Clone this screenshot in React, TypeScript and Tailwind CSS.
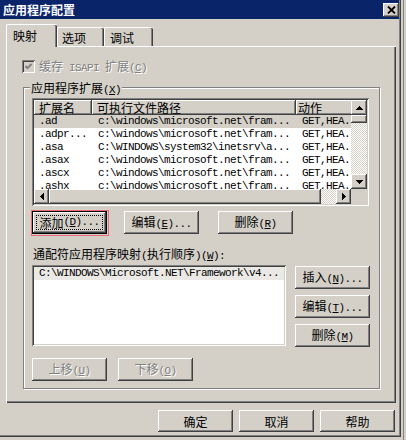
import clsx from 'clsx'

const mono = "font-['Liberation_Mono',monospace] text-[11px] tracking-[-0.6px]"
const raised = 'bg-[#d4d0c8] shadow-[inset_-1px_-1px_0_#404040,inset_1px_1px_0_#fff,inset_-2px_-2px_0_#808080]'
const sunken = 'shadow-[inset_1px_1px_0_#808080,inset_-1px_-1px_0_#fff,inset_2px_2px_0_#404040,inset_-2px_-2px_0_#d4d0c8]'
const dim = 'text-[#808080] [text-shadow:1px_1px_0_#fff]'
const dither = 'bg-[repeating-conic-gradient(#fff_0_25%,#d4d0c8_0_50%)] bg-[length:2px_2px]'

// '&' marks the access key, which gets underlined
function Txt({ text }: { text: string }) {
  const runs: { s: string; wide: boolean; u: boolean }[] = []
  for (let i = 0; i < text.length; i++) {
    let c = text[i]
    let u = false
    if (c === '&' && i + 1 < text.length) {
      c = text[++i]
      u = true
    }
    const wide = c.charCodeAt(0) > 0x2e80
    const last = runs[runs.length - 1]
    if (last && last.wide === wide && last.u === u) last.s += c
    else runs.push({ s: c, wide, u })
  }
  return (
    <>
      {runs.map((r, i) => (
        <span key={i} className={clsx(r.wide ? 'text-[12px]' : mono, r.u && 'underline underline-offset-[1px]')}>
          {r.s}
        </span>
      ))}
    </>
  )
}

function Btn({ label, className, focus, disabled }: { label: string; className?: string; focus?: boolean; disabled?: boolean }) {
  return (
    <div className={clsx('relative h-[23px] w-[75px] shrink-0 flex', focus && 'border border-black', className)}>
      {focus && <div className="absolute -left-[2px] -top-[2px] -right-[3px] -bottom-[3px] border border-[#ee6a78]" />}
      <div className={clsx('flex-1 flex items-center justify-center', raised, focus && 'p-[3px]')}>
        {focus ? (
          <div className="flex-1 self-stretch border border-dotted border-black flex items-center justify-center whitespace-pre leading-[13px]">
            <Txt text={label} />
          </div>
        ) : (
          <span className={clsx('whitespace-pre leading-[13px]', disabled && dim)}>
            <Txt text={label} />
          </span>
        )}
      </div>
    </div>
  )
}

function Arrow({ dir }: { dir: 'up' | 'down' | 'left' | 'right' }) {
  const vert = dir === 'up' || dir === 'down'
  const d = {
    up: 'M3.5 0L7 4H0z',
    down: 'M0 0h7L3.5 4z',
    left: 'M4 0v7L0 3.5z',
    right: 'M0 0v7L4 3.5z',
  }[dir]
  return (
    <svg width={vert ? 7 : 4} height={vert ? 4 : 7} viewBox={vert ? '0 0 7 4' : '0 0 4 7'} shapeRendering="crispEdges">
      <path d={d} fill="#000" />
    </svg>
  )
}

function Tab({ label, active, className }: { label: string; active?: boolean; className?: string }) {
  return (
    <div
      className={clsx(
        'flex items-center bg-[#d4d0c8] border-l border-t border-white rounded-t-[2px] shadow-[inset_-1px_0_0_#404040,inset_-2px_0_0_#808080] leading-[13px]',
        active ? 'relative z-10 h-[23px] -mb-px pb-[1px]' : 'h-[19px]',
        className,
      )}
    >
      <Txt text={label} />
    </div>
  )
}

const rows = [
  ['.ad', 'c:\\windows\\microsoft.net\\fram...', 'GET,HEA...'],
  ['.adpr...', 'c:\\windows\\microsoft.net\\fram...', 'GET,HEA...'],
  ['.asa', 'C:\\WINDOWS\\system32\\inetsrv\\a...', 'GET,HEA...'],
  ['.asax', 'c:\\windows\\microsoft.net\\fram...', 'GET,HEA...'],
  ['.ascx', 'c:\\windows\\microsoft.net\\fram...', 'GET,HEA...'],
  ['.ashx', 'c:\\windows\\microsoft.net\\fram...', 'GET,HEA...'],
]

function ExtList() {
  return (
    <div className={clsx('w-[337px] h-[108px] bg-white p-[2px] flex', sunken)}>
      <div className="w-[317px] flex flex-col">
        <div className="flex-1 overflow-hidden">
          <div className="flex h-[15px] leading-[13px]">
            <div className={clsx('w-[58px] shrink-0 pl-[5px] flex items-center', raised)}>扩展名</div>
            <div className={clsx('w-[204px] shrink-0 pl-[5px] flex items-center', raised)}>可执行文件路径</div>
            <div className={clsx('w-[80px] shrink-0 pl-[2px] flex items-center', raised)}>动作</div>
          </div>
          {rows.map((r, i) => (
            <div key={i} className={clsx('flex h-[13px] items-center whitespace-nowrap leading-[13px]', mono, i === 0 && 'bg-[#d4d0c8]')}>
              <div className="w-[58px] shrink-0 pl-[5px] overflow-hidden">{r[0]}</div>
              <div className="w-[204px] shrink-0 pl-[6px] overflow-hidden">{r[1]}</div>
              <div className="w-[80px] shrink-0 pl-[6px] overflow-hidden">{r[2]}</div>
            </div>
          ))}
        </div>
        <div className="h-[15px] flex shrink-0">
          <div className={clsx('w-[15px] flex items-center justify-center', raised)}>
            <Arrow dir="left" />
          </div>
          <div className={clsx('w-[272px]', raised)} />
          <div className={clsx('flex-1', dither)} />
          <div className={clsx('w-[15px] flex items-center justify-center', raised)}>
            <Arrow dir="right" />
          </div>
        </div>
      </div>
      <div className="w-[16px] flex flex-col">
        <div className={clsx('h-[15px] flex items-center justify-center', raised)}>
          <Arrow dir="up" />
        </div>
        <div className={clsx('h-[8px]', raised)} />
        <div className={clsx('flex-1', dither)} />
        <div className={clsx('h-[15px] flex items-center justify-center', raised)}>
          <Arrow dir="down" />
        </div>
        <div className="h-[15px] bg-[#d4d0c8]" />
      </div>
    </div>
  )
}

export default function App() {
  return (
    <div className="flex w-[406px] h-[440px] bg-[#d4d0c8] overflow-hidden font-['Noto_Sans_CJK_SC',sans-serif] text-[12px] text-black">
      <div className="w-[401px] h-[437px] shrink-0 pr-[2px] pb-[2px] flex flex-col shadow-[inset_-1px_-1px_0_#404040,inset_-2px_-2px_0_#808080]">
        <div className="h-[19px] bg-[#0a246a] flex items-center justify-between pl-[3px]">
          <span className="text-white font-bold text-[12px] leading-[13px]">应用程序配置</span>
          <div className={clsx('w-[16px] h-[14px] flex items-center justify-center', raised)}>
            <svg width="9" height="8" viewBox="0 0 9 8">
              <path d="M1 0.5L8 7.5M8 0.5L1 7.5" stroke="#000" strokeWidth="1.8" />
            </svg>
          </div>
        </div>

        <div className="pl-[6px] pr-[3px] flex flex-col">
          <div className="flex items-end h-[22px] mt-[5px]">
            <Tab label="映射" active className="w-[51px] pl-[6px]" />
            <Tab label="选项" className="w-[47px] pl-[4px]" />
            <Tab label="调试" className="w-[49px] pl-[5px]" />
          </div>

          <div className="w-[390px] h-[357px] pt-[14px] flex flex-col shadow-[inset_1px_1px_0_#fff,inset_-1px_-1px_0_#404040,inset_-2px_-2px_0_#808080]">
            <div className="flex items-center h-[13px] ml-[16px]">
              <div className={clsx('w-[13px] h-[13px] bg-[#d4d0c8] flex items-center justify-center', sunken)}>
                <svg width="9" height="9" viewBox="0 0 9 9">
                  <polyline points="1.5,4 3.5,6.2 7.5,2" fill="none" stroke="#808080" strokeWidth="1.9" />
                </svg>
              </div>
              <span className={clsx('ml-[4px] whitespace-pre leading-[13px]', dim)}>
                <Txt text="缓存 ISAPI 扩展(&C)" />
              </span>
            </div>

            <div className="relative ml-[17px] mt-[14px] w-[357px] border border-[#808080] shadow-[1px_1px_0_#fff,inset_1px_1px_0_#fff] pl-[8px] pt-[10px] pb-[7px]">
              <span className="absolute left-[6px] -top-[7px] bg-[#d4d0c8] px-[1px] leading-[13px] whitespace-pre">
                <Txt text="应用程序扩展(&X)" />
              </span>

              <ExtList />

              <div className="flex mt-[5px]">
                <Btn label="添加(&D)..." focus />
                <Btn label="编辑(&E)..." className="ml-[17px]" />
                <Btn label="删除(&R)" className="ml-[19px]" />
              </div>

              <div className="mt-[13px] ml-[1px] h-[13px] leading-[13px] whitespace-pre">
                <Txt text="通配符应用程序映射(执行顺序)(&W):" />
              </div>

              <div className="flex mt-[5px]">
                <div className={clsx('w-[254px] h-[81px] bg-white p-[2px]', sunken)}>
                  <div className={clsx('h-[13px] bg-[#ebe9e5] pl-[5px] flex items-center whitespace-nowrap leading-[13px]', mono)}>
                    C:\WINDOWS\Microsoft.NET\Framework\v4...
                  </div>
                </div>
                <div className="ml-[9px] mt-[1px] flex flex-col gap-[6px]">
                  <Btn label="插入(&N)..." />
                  <Btn label="编辑(&T)..." />
                  <Btn label="删除(&M)" />
                </div>
              </div>

              <div className="flex mt-[11px]">
                <Btn label="上移(&U)" disabled />
                <Btn label="下移(&O)" disabled className="ml-[11px]" />
              </div>
            </div>
          </div>

          <div className="flex justify-end gap-[6px] mt-[7px] pr-[1px]">
            <Btn label="确定" className="!h-[22px]" />
            <Btn label="取消" className="!h-[22px]" />
            <Btn label="帮助" className="!h-[22px]" />
          </div>
        </div>
      </div>
      <div className="flex-1 flex">
        <div className="w-[2px]" />
        <div className="w-px bg-[#808080]" />
        <div className="flex-1" />
      </div>
    </div>
  )
}
